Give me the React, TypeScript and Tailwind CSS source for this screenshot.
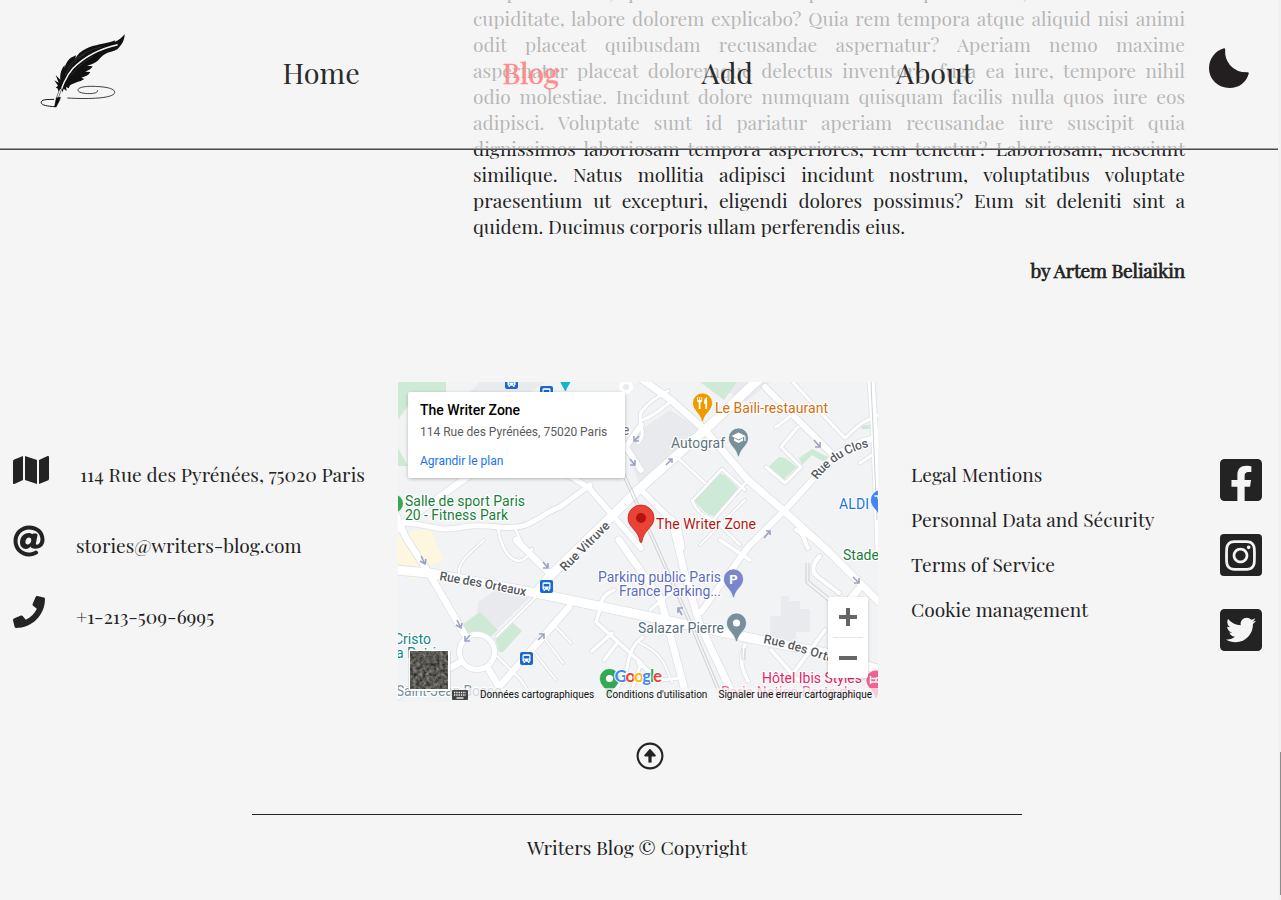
import type { ReactNode } from "react";
import {
  FaAt,
  FaFacebookSquare,
  FaInstagram,
  FaMap,
  FaPhone,
  FaTwitterSquare,
} from "react-icons/fa";

const ARTICLE_LINES = [
  "tempora facere, quia minus odit temporibus vel quaerat eos, enim sint rerum",
  "cupiditate, labore dolorem explicabo? Quia rem tempora atque aliquid nisi animi",
  "odit placeat quibusdam recusandae aspernatur? Aperiam nemo maxime",
  "aspernatur placeat doloremque delectus inventore, fuga ea iure, tempore nihil",
  "odio molestiae. Incidunt dolore numquam quisquam facilis nulla quos iure eos",
  "adipisci. Voluptate sunt id pariatur aperiam recusandae iure suscipit quia",
  "dignissimos laboriosam tempora asperiores, rem tenetur? Laboriosam, nesciunt",
  "similique. Natus mollitia adipisci incidunt nostrum, voluptatibus voluptate",
  "praesentium ut excepturi, eligendi dolores possimus? Eum sit deleniti sint a",
];

function FeatherLogo() {
  return (
    <svg viewBox="0 0 330 270" className="h-[90px] w-[110px] shrink-0" fill="none">
      <path
        d="M284 28C284 44 276 60 262 73C250 80 236 81 227 86C212 94 208 104 198 111C190 117 180 120 171 122L188 124C184 132 176 136 166 140L181 141C176 151 165 155 154 158L163 162C150 171 130 173 120 181L116 190L108 186L110 198L101 191L98 201L91 192L86 199L82 190L77 188L84 182L73 166L86 173L77 150L91 164C89 148 94 132 104 120L104 130C107 116 114 102 127 96L138 91L136 101C142 88 152 78 168 71C192 58 228 57 250 48L256 46L254 51C266 46 276 38 284 28Z"
        fill="#111"
      />
      <path d="M112 130C132 100 170 76 214 66M124 150C140 132 160 110 188 94M106 150C116 128 142 100 164 88" stroke="#3c3c3c" strokeWidth="2" />
      <path d="M263 59C214 70 165 93 129 130C105 157 96 186 85 222" stroke="#f5f5f5" strokeWidth="4.5" />
      <path d="M96 190L84 221M88 194L79 220" stroke="#222" strokeWidth="1.8" />
      <path d="M79 219L91 217C90 226 84 234 78 246L74 245Z" fill="#080808" stroke="#080808" strokeWidth="2" />
      <path d="M76 245C48 244 30 239 34 230C38 222 56 224 72 223" stroke="#161616" strokeWidth="3" />
      <path d="M112 219C180 223 250 220 254 203C256 189 220 184 182 184C148 184 135 194 150 202C166 208 208 208 202 195" stroke="#222" strokeWidth="2.6" />
    </svg>
  );
}

function Header() {
  return (
    <header className="absolute left-0 top-0 z-10 w-[1278px]">
      <div className="flex h-[148px] items-start bg-[#f5f5f5]/70">
        <div className="w-[282.5px] pl-[30px] pt-[25px]">
          <FeatherLogo />
        </div>
        <nav className="flex grow pt-[52px] text-[28.8px] leading-[40px] text-[#2b2b2b]">
          <a className="w-[220px]">Home</a>
          <a className="w-[199px] text-[#ff8b8b] [-webkit-text-stroke:0.5px_#ff8b8b]">Blog</a>
          <a className="w-[194.5px]">Add</a>
          <a>About</a>
        </nav>
        <svg viewBox="0 0 42 42" className="mr-[28px] mt-[47px] size-[42px] shrink-0">
          <path
            d="M16.2 2.2C15.2 13.5 22.5 26.6 39.8 26.3C37.4 35 30.2 40 21.5 40C10.6 40 2 31.8 2 21.3C2 12.2 7.8 4.6 16.2 2.2Z"
            fill="#231f20"
            stroke="#231f20"
            strokeWidth="2"
            strokeLinejoin="round"
          />
        </svg>
      </div>
      <div className="h-px bg-[#9c9c9c]" />
      <div className="h-px bg-[#4a4a4a]" />
    </header>
  );
}

type PinProps = { x: number; y: number; fill: string; children?: ReactNode };

function Pin({ x, y, fill, children }: PinProps) {
  return (
    <g transform={`translate(${x} ${y})`}>
      <path
        d="M0-10A10 10 0 0 1 10 0C10 7.5 2.6 9.5.8 18.2A.9.9 0 0 1-.8 18.2C-2.6 9.5-10 7.5-10 0A10 10 0 0 1 0-10Z"
        fill={fill}
        stroke="#fff"
        strokeOpacity=".6"
      />
      {children}
    </g>
  );
}

function BusStop({ x, y }: { x: number; y: number }) {
  return (
    <g transform={`translate(${x} ${y})`}>
      <rect x="-6.5" y="-6.5" width="13" height="13" rx="2" fill="#1967d2" />
      <rect x="-4" y="-4.2" width="8" height="7.4" rx="1.4" fill="#fff" />
      <path d="M-3 3H-1.6V4.4H-3ZM1.6 3H3V4.4H1.6Z" fill="#fff" />
      <path d="M-2.8-2.6H2.8V0H-2.8Z" fill="#1967d2" />
      <circle cx="-2" cy="1.6" r=".7" fill="#1967d2" />
      <circle cx="2" cy="1.6" r=".7" fill="#1967d2" />
    </g>
  );
}

type LabelProps = { x: number; y: number; w?: number; fill: string; children: string };

function Label({ x, y, w, fill, children }: LabelProps) {
  return (
    <text x={x} y={y} textLength={w} fill={fill} stroke="#fff" strokeWidth="2.4" strokeLinejoin="round" paintOrder="stroke">
      {children}
    </text>
  );
}

const ROADS: [string, number][] = [
  ["M459 573C458 562 470 553 484 540M496 637L536 597M496 655L521 680L530 694M556 627L571 643M545 639L563 663M534 652L556 680", 2],
  ["M498 527C500 545 508 560 519 561C526 560 529 554 532 549M516 530C519 538 520 541 525 548", 2.5],
  ["M678 458L705 483M693 500L722 469L745 490M692 500C697 512 706 519 714 519L748 480M714 519L740 545", 2.5],
  ["M791 380L825 417L845 438C852 432 858 424 868 420L878 415M776 427L792 415M860 463L872 455M781 447L801 467L785 483L766 467M781 447L798 427", 3],
  ["M642 420C658 415 668 402 672 401M638 443C648 433 637 424 641 412C648 403 660 395 668 391", 3],
  ["M596 622L641 663L655 680M614 590C604 594 601 600 601 606L596 622M612 633L592 651M618 642L604 660", 3.5],
  ["M650 610L673 591M643 637C630 646 628 660 626 674L612 696M641 663L632 690M638 663L662 680L680 678", 3],
  ["M745 645C741 655 739 665 748 681M771 650L795 677L820 700M825 630L792 675M720 540L750 560", 3.5],
  ["M839 593L818 577C811 572 812 564 820 556M808 548C804 543 806 534 796 530", 4],
  ["M785 512L800 530L830 556M640 643C666 655 666 670 672 682M700 545L745 500", 2],
  ["M403 523C430 524 440 533 463 527C490 522 505 532 526 525C540 519 548 511 560 507L590 485", 5],
  ["M396 531L403 523L466 478L500 450M396 515L406 538L429 573L466 637M516 540L549 573M569 607L499 687L489 670M396 697L459 663", 6.5],
  ["M765 387L798 420L835 457M835 455C845 450 860 440 878 438M835 455L785 510L748 547L701 612", 6],
  ["M560 470L589 488L641 548M641 470L626 447L641 425M641 490L678 527L682 548", 5.5],
  ["M871 380L875 440L879 550M640 378L671 400L705 430L748 480L785 512L825 548L880 603M858 590L840 611", 7],
  ["M619 540L661 600L690 710M672 520L685 575L700 625L740 710", 7],
  ["M760 378L705 430L638 490L612 516L549 577L536 593", 9],
  ["M396 570L429 573L536 593L641 615L745 637L825 653L880 670", 9],
];

function MapDrawing() {
  return (
    <svg viewBox="398 382 480 320" className="h-[320px] w-[480px]" fontFamily="Roboto, sans-serif" fontSize="14">
      <defs>
        <filter id="terrain" x="0" y="0" width="1" height="1" colorInterpolationFilters="sRGB">
          <feTurbulence type="fractalNoise" baseFrequency=".3" numOctaves="4" seed="8" />
          <feColorMatrix values=".5 .2 0 0 0 .5 .2 0 0 -.005 .5 .2 0 0 -.03 0 0 0 0 1" />
        </filter>
      </defs>
      <rect x="398" y="382" width="480" height="320" fill="#f1f3f4" />
      <g fill="#e8eaed">
        <path d="M641 430L670 410L704 432L641 488L626 450ZM735 382H770L745 402L728 392ZM478 602L497 589L530 597L498 628L477 614ZM781 596H789V601H800V609H810V632H796V641H770V616H781ZM480 382H545L530 392H470Z" />
      </g>
      <g fill="#ceead6">
        <path d="M398 382H446V392H418L398 420ZM398 448L408 466L398 466ZM700 382H737L724 400ZM693 500L716 475Q722 472 727 477L738 488L718 514Q712 518 706 513ZM768 467L779 457L785 458L797 467L785 478L783 485ZM799 458L812 449L828 457L826 463L812 455L802 465ZM860 426L878 423V429H862ZM463 624L480 612L498 630L491 636L477 631L465 634ZM495 638L512 622L522 631L503 652H499Z" />
      </g>
      <path d="M398 531L406 533L430 528L444 560L428 566L415 580L398 568Z" fill="#fef7e0" />
      {ROADS.map(([d, w]) => (
        <path key={d} d={d} fill="none" stroke="#dde1e6" strokeWidth={w + 1.6} strokeLinecap="round" strokeLinejoin="round" />
      ))}
      <circle cx="477" cy="652" r="17.5" fill="#f1f3f4" stroke="#dde1e6" strokeWidth="6.5" />
      {ROADS.map(([d, w]) => (
        <path key={d} d={d} fill="none" stroke="#fff" strokeWidth={w} strokeLinecap="round" strokeLinejoin="round" />
      ))}
      <circle cx="477" cy="652" r="17.5" fill="none" stroke="#fff" strokeWidth="5" />
      <circle cx="626" cy="387" r="5" fill="#e8eaed" stroke="#fff" strokeWidth="4" />
      <path d="M622 474L652 540L692 630L722 702M625 474L655 540L695 630L725 702M871 382L877 520M806 563V583L828 601M809 563V581L830 598M742 648V660M745 648V660" fill="none" stroke="#cdd0d5" strokeWidth="1" />
      {/* one-way arrows */}
      <g fill="none" stroke="#9aa3c0" strokeWidth="1.6">
        <path d="M666 465L672 459M668 459H672V463M814 440L820 447M820 442V447H815M764 538L770 531M766 531H770V535M421 556L425 564M420 561L425 564L426 559M543 562L548 568M548 563V568H543M457 620L461 628M456 625L461 628L462 623M470 635L465 641M465 636V641H470M538 640L544 634M539 634H544V639M682 615L678 608M678 613V608H683M853 577L859 583M859 578V583H854M639 436L634 441M634 436V441H639M630 459L635 465M635 460V465H630" />
      </g>
      <g fontSize="12.5" fontWeight="500" fill="#55595e" stroke="#fff" strokeWidth="2.4" paintOrder="stroke" strokeLinejoin="round">
        <path id="vitruve" d="M565 572L612 525" fill="none" stroke="none" />
        <path id="clos" d="M817 480C828 466 842 453 872 446" fill="none" stroke="none" />
        <path id="orteaux" d="M439 580L480 587L535 598" fill="none" stroke="none" />
        <path id="orteaux-east" d="M763 643C785 647 805 653 850 669" fill="none" stroke="none" />
        <text><textPath href="#vitruve">Rue Vitruve</textPath></text>
        <text><textPath href="#clos" textLength="63">Rue du Clos</textPath></text>
        <text><textPath href="#orteaux" textLength="88">Rue des Orteaux</textPath></text>
        <text><textPath href="#orteaux-east">Rue des Orteaux</textPath></text>
      </g>
      <Label x={622} y={435} fill="#73808a">e</Label>
      <Label x={405} y={506} w={120} fill="#188038">Salle de sport Paris</Label>
      <Label x={405} y={520} w={103} fill="#188038">20 - Fitness Park</Label>
      <Label x={715} y={413} w={113} fill="#d56e0c">Le Baïli-restaurant</Label>
      <Label x={671} y={448} w={54} fill="#5d737e">Autograf</Label>
      <Label x={839} y={509} w={30} fill="#1a73e8">ALDI</Label>
      <Label x={656} y={529} w={100} fill="#b31412">The Writer Zone</Label>
      <Label x={598} y={582} w={123} fill="#5c6bc0">Parking public Paris</Label>
      <Label x={619} y={596} w={102} fill="#5c6bc0">France Parking...</Label>
      <Label x={638} y={633} w={86} fill="#546e7a">Salazar Pierre</Label>
      <Label x={843} y={560} fill="#188038">Stade</Label>
      <Label x={394} y={644} fill="#12858d">Cristo</Label>
      <Label x={396} y={658} fill="#12858d">a Patrie</Label>
      <Label x={396} y={696} w={106} fill="#78909c">Saint-Jean Bosco</Label>
      <Label x={762} y={683} w={100} fill="#e91e63">Hôtel Ibis Styles</Label>
      <Label x={721} y={697} w={134} fill="#f06292">Paris Nation Porte de</Label>
      <BusStop x={511.5} y={382.5} />
      <BusStop x={546.5} y={392.5} />
      <BusStop x={546.5} y={586.5} />
      <BusStop x={526.5} y={658.5} />
      <path d="M559 378H572C570 385 567 386 566 391H565C563 386 561 385 559 378Z" fill="#12b5cb" />
      <circle cx="394" cy="503.5" r="9" fill="#34a853" />
      <Pin x={702.5} y={403} fill="#f29900">
        <path d="M-5.5-6H-4.6V-3H-3.4V-6H-2.4V-3H-1.2V-6H-.3V-2.4Q-.3-.8-2-.4V6H-3.8V-.4Q-5.5-.8-5.5-2.4ZM4.6-6Q1.6-5 1.6-1V1H2.8V6H4.6Z" fill="#fff" />
      </Pin>
      <Pin x={738.5} y={438} fill="#78909c">
        <path d="M0-5.5L7-2L0 1.5L-7-2ZM-4.5 0L0 2.5L4.5 0V2.8L0 5L-4.5 2.8ZM5.8-1.5H7V3H5.8Z" fill="#fff" />
      </Pin>
      <Pin x={733.5} y={579} fill="#7986cb">
        <text x="-4.2" y="4.8" fontSize="13" fontWeight="700" fill="#fff">P</text>
      </Pin>
      <Pin x={736.5} y={623} fill="#78909c"><circle r="3.6" fill="#fff" /></Pin>
      <Pin x={609.5} y={678.5} fill="#34a853"><circle r="3.6" fill="#fff" /></Pin>
      <Pin x={880.5} y={500} fill="#4285f4"><path d="M-6-4H-3L-1 2H4M-3-2H5" fill="none" stroke="#fff" strokeWidth="1.4" /></Pin>
      <Pin x={876} y={680} fill="#f06292"><path d="M-5.5-4V4M-5.5 2H5M-4.5-1.5H0V1M0-2H5V4" fill="none" stroke="#fff" strokeWidth="1.4" /></Pin>
      <path d="M641 505A13 13 0 0 1 654 518C654 527.5 643.5 530 642 541.5A1 1 0 0 1 640 541.5C638.5 530 628 527.5 628 518A13 13 0 0 1 641 505Z" fill="#ea4335" stroke="#c5221f" strokeWidth=".8" />
      <circle cx="641" cy="518" r="5" fill="#b31412" />
      {/* attribution strip */}
      <rect x="450" y="688" width="428" height="14" fill="#f5f5f5" fillOpacity=".72" />
      <text x="614.5" y="682" fontSize="17" fontWeight="700" fontFamily="Lato, sans-serif" textLength="47.5" stroke="#fff" strokeWidth="2" paintOrder="stroke">
        <tspan fill="#4285f4">G</tspan><tspan fill="#ea4335">o</tspan><tspan fill="#fbbc04">o</tspan><tspan fill="#4285f4">g</tspan><tspan fill="#34a853">l</tspan><tspan fill="#ea4335">e</tspan>
      </text>
      <rect x="408" y="649.5" width="42.5" height="42" rx="2" fill="#000" opacity=".18" />
      <rect x="408.5" y="649.5" width="41.5" height="41.5" rx="1.5" fill="#fff" />
      <rect x="410" y="651" width="38" height="38" filter="url(#terrain)" />
      <rect x="452" y="690" width="16" height="10" rx="1" fill="#444" />
      <path d="M454 692.5H466M454 695H466" stroke="#fff" strokeWidth="1.3" strokeDasharray="1.3 1" />
      <path d="M456.5 698H463.5" stroke="#fff" strokeWidth="1.3" />
      <g fill="#111" fontSize="10">
        <text x="480" y="698">Données cartographiques</text>
        <text x="606" y="698">Conditions d'utilisation</text>
        <text x="718.5" y="698">Signaler une erreur cartographique</text>
      </g>
    </svg>
  );
}

function MapPanel() {
  return (
    <div className="relative h-[320px] w-[480px] shrink-0 overflow-hidden font-[Roboto,sans-serif]">
      <MapDrawing />
      <div className="absolute left-[10px] top-[10px] h-[86px] w-[217px] rounded-[2px] bg-white pl-3 pt-[9px] shadow-[0_1px_4px_-1px_rgba(0,0,0,0.4)]">
        <p className="text-[14px] font-medium leading-[18px] text-black">The Writer Zone</p>
        <p className="mt-[5px] text-[12px] leading-4 text-[#5b5b5b]">114 Rue des Pyrénées, 75020 Paris</p>
        <p className="mt-[13px] text-[12px] leading-4 text-[#1a73e8]">Agrandir le plan</p>
      </div>
      <div className="absolute left-[430px] top-[215px] flex h-[81px] w-10 flex-col items-center rounded-[2px] bg-white shadow-[0_1px_4px_-1px_rgba(0,0,0,0.3)]">
        <svg viewBox="0 0 18 18" className="mt-[11px] size-[18px]" stroke="#666" strokeWidth="4">
          <path d="M0 9H18M9 0V18" />
        </svg>
        <div className="mt-[11px] h-px w-[30px] bg-[#e6e6e6]" />
        <div className="mt-[18px] h-1 w-[18px] bg-[#666]" />
      </div>
    </div>
  );
}

export default function App() {
  return (
    <div className="relative flex h-[900px] w-[1281px] overflow-hidden bg-[#f5f5f5] font-['Playfair_Display','Liberation_Serif',serif] text-[19.2px] text-[#232323]">
      <Header />
      <div className="flex w-[1278px] flex-col">
        <article className="-mt-[21px] ml-[473px] w-[712px] leading-[26px]">
          {ARTICLE_LINES.map((line) => (
            <p key={line} className="h-[26px] whitespace-nowrap [text-align-last:justify]">{line}</p>
          ))}
          <p>quidem. Ducimus corporis ullam perferendis eius.</p>
          <p className="mt-[18px] text-right tracking-[-0.22px] [-webkit-text-stroke:0.7px_#232323]">by Artem Beliaikin</p>
        </article>

        <footer className="mt-[99px] flex flex-col">
          <div className="flex h-[320px]">
            <ul className="flex w-[398px] flex-col pl-[12.5px] pt-[66px] leading-[52px]">
              <li className="flex h-[71px] items-start">
                <FaMap className="mt-[6px] h-8 w-9" />
                <span className="ml-[31.5px]">114 Rue des Pyrénées, 75020 Paris</span>
              </li>
              <li className="flex h-[71px] items-start">
                <FaAt className="mt-[6px] size-8" />
                <span className="ml-[31.5px]">stories@writers-blog.com</span>
              </li>
              <li className="flex h-[71px] items-start">
                <FaPhone className="mt-[6px] size-8" />
                <span className="ml-[31.5px]">+1-213-509-6995</span>
              </li>
            </ul>
            <MapPanel />
            <ul className="flex w-[341.5px] flex-col pl-[33px] pt-[70px] leading-[45px]">
              <li>Legal Mentions</li>
              <li>Personnal Data and Sécurity</li>
              <li>Terms of Service</li>
              <li>Cookie management</li>
            </ul>
            <div className="flex flex-col gap-[27px] pt-[74px] text-[#232323]">
              <FaFacebookSquare className="h-12 w-[42px]" />
              <div className="flex h-12 w-[42px] items-center">
                <div className="flex size-[42px] items-center justify-center rounded-[4px] bg-[#232323] text-[#f5f5f5]">
                  <FaInstagram className="size-[35px]" />
                </div>
              </div>
              <FaTwitterSquare className="h-12 w-[42px]" />
            </div>
          </div>
          <svg viewBox="0 0 28 28" className="ml-[636px] mt-[40px] size-[28px]">
            <circle cx="14" cy="14" r="12.4" fill="none" stroke="#232323" strokeWidth="2.2" />
            <path d="M14 7.8L19 13.6H9Z" fill="#232323" stroke="#232323" strokeWidth="1.6" strokeLinejoin="round" />
            <path d="M14 12V20.6" stroke="#232323" strokeWidth="3.2" />
          </svg>
          <div className="ml-[252px] mt-[44px] h-px w-[770px] bg-[#232323]" />
          <p className="ml-[527px] mt-[19px] leading-[26px]">Writers Blog © Copyright</p>
        </footer>
      </div>
      <div className="flex w-[3px] flex-col items-end bg-[#f1f1f1]">
        <div className="mt-[752px] h-[143px] w-px bg-[#8c8c8c]" />
      </div>
    </div>
  );
}
